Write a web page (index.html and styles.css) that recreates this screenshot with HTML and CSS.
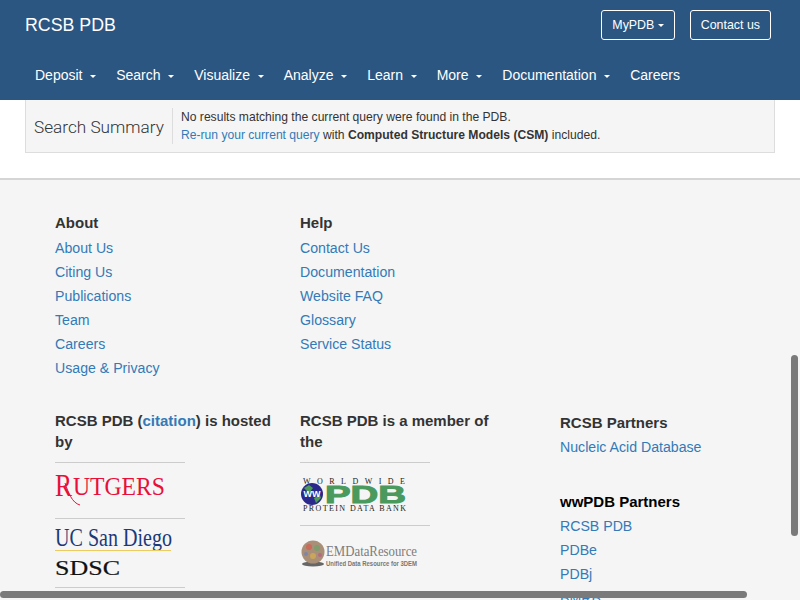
FILE: index.html
```html
<!DOCTYPE html>
<html lang="en">
<head>
    <meta charset="UTF-8">
    <meta name="viewport" content="width=device-width, initial-scale=1.0">
    <title>RCSB PDB</title>
    <link rel="stylesheet" href="styles.css">
</head>
<body>
    <header class="site-header">
        <div class="top-bar">
            <a class="brand" href="#">RCSB PDB</a>
            <div class="top-buttons">
                <a class="outline-btn" href="#">MyPDB <span class="caret"></span></a>
                <a class="outline-btn" href="#">Contact us</a>
            </div>
        </div>
        <nav class="main-nav">
            <a href="#">Deposit <span class="caret"></span></a>
            <a href="#">Search <span class="caret"></span></a>
            <a href="#">Visualize <span class="caret"></span></a>
            <a href="#">Analyze <span class="caret"></span></a>
            <a href="#">Learn <span class="caret"></span></a>
            <a href="#">More <span class="caret"></span></a>
            <a href="#">Documentation <span class="caret"></span></a>
            <a href="#">Careers</a>
        </nav>
    </header>

    <section class="summary">
        <h2 class="summary-title">Search Summary</h2>
        <div class="summary-text">
            <p>No results matching the current query were found in the PDB.</p>
            <p><a href="#">Re-run your current query</a> with <b>Computed Structure Models (CSM)</b> included.</p>
        </div>
    </section>

    <footer class="site-footer">
        <div class="footer-grid">
            <div class="link-block">
                <h4>About</h4>
                <a href="#">About Us</a>
                <a href="#">Citing Us</a>
                <a href="#">Publications</a>
                <a href="#">Team</a>
                <a href="#">Careers</a>
                <a href="#">Usage &amp; Privacy</a>
            </div>
            <div class="link-block">
                <h4>Help</h4>
                <a href="#">Contact Us</a>
                <a href="#">Documentation</a>
                <a href="#">Website FAQ</a>
                <a href="#">Glossary</a>
                <a href="#">Service Status</a>
            </div>
            <div></div>

            <div class="logo-block">
                <h4>RCSB PDB (<a href="#">citation</a>) is hosted by</h4>
                <div class="logo logo-rutgers">
                    <svg width="112" height="46" viewBox="0 0 112 46">
                        <text class="rutgers-r" x="0" y="33" textLength="17" lengthAdjust="spacingAndGlyphs">R</text>
                        <path class="rutgers-tail" d="M10 20 C13 29 17 40 25 42"></path>
                        <text class="rutgers-text" x="18" y="32" textLength="92" lengthAdjust="spacingAndGlyphs">UTGERS</text>
                    </svg>
                </div>
                <div class="logo logo-ucsd">
                    <svg width="118" height="60" viewBox="0 0 118 60">
                        <text class="ucsd-text" x="0" y="27" textLength="117" lengthAdjust="spacingAndGlyphs">UC San Diego</text>
                        <rect class="ucsd-line" x="0" y="31" width="116" height="1"></rect>
                        <text class="sdsc-text" x="0" y="56" textLength="65" lengthAdjust="spacingAndGlyphs">SDSC</text>
                    </svg>
                </div>
                <div class="logo"></div>
            </div>
            <div class="logo-block logo-block-narrow">
                <h4>RCSB PDB is a member of the</h4>
                <div class="logo logo-wwpdb">
                    <svg width="108" height="52" viewBox="0 0 108 52">
                        <text class="ww-small" x="3" y="21" textLength="102">WORLDWIDE</text>
                        <circle cx="12" cy="31" r="11" fill="#2b2a8c"></circle>
                        <path d="M4 25 l5 -3 l4 3 l-4 5 z M14 35 l6 -3 l1 3 l-5 5 z" fill="#4c9a55"></path>
                        <text class="ww-globe" x="12" y="34">WW</text>
                        <text class="ww-pdb" x="25" y="40" textLength="81" lengthAdjust="spacingAndGlyphs">PDB</text>
                        <text class="ww-small" x="3" y="48" textLength="103">PROTEIN DATA BANK</text>
                    </svg>
                </div>
                <div class="logo logo-em">
                    <svg width="118" height="46" viewBox="0 0 118 46">
                        <ellipse cx="13" cy="38" rx="11" ry="2.5" fill="#666"></ellipse>
                        <circle cx="13" cy="26" r="11.5" fill="#a98f78"></circle>
                        <circle cx="9" cy="21" r="3" fill="#c96a5a"></circle>
                        <circle cx="17" cy="22" r="3" fill="#7f9c6f"></circle>
                        <circle cx="13" cy="30" r="3" fill="#c9a65a"></circle>
                        <circle cx="6" cy="28" r="2" fill="#7d86a8"></circle>
                        <circle cx="20" cy="29" r="2" fill="#b46a80"></circle>
                        <text class="em-title" x="26" y="30" textLength="91" lengthAdjust="spacingAndGlyphs">EMDataResource</text>
                        <text class="em-sub" x="26" y="40" textLength="91" lengthAdjust="spacingAndGlyphs">Unified Data Resource for 3DEM</text>
                    </svg>
                </div>
            </div>
            <div class="partners">
                <div class="link-block">
                    <h4>RCSB Partners</h4>
                    <a href="#">Nucleic Acid Database</a>
                </div>
                <div class="link-block ww-partners">
                    <h4>wwPDB Partners</h4>
                    <a href="#">RCSB PDB</a>
                    <a href="#">PDBe</a>
                    <a href="#">PDBj</a>
                    <a href="#">BMRB</a>
                </div>
            </div>
        </div>
    </footer>

    <div class="scroll-thumb-v"></div>
    <div class="scroll-thumb-h"></div>
</body>
</html>
```

FILE: styles.css
```css
html, body {
    height: 600px;
    overflow: hidden;
}
body {
    margin: 0;
    position: relative;
    background: #fff;
    color: #333;
    font-family: "Liberation Sans", Arial, sans-serif;
    font-size: 14px;
}
a {
    color: #337ab7;
    text-decoration: none;
}
p, h2, h4 {
    margin: 0;
}

/* header */
.site-header {
    height: 100px;
    background-color: #2b5682;
    box-sizing: border-box;
    padding: 10px 29px 0 25px;
}
.top-bar {
    display: flex;
    justify-content: space-between;
    align-items: center;
    height: 30px;
}
.brand {
    color: #fff;
    font-size: 17.8px;
}
.top-buttons {
    display: flex;
    gap: 15px;
}
.outline-btn {
    display: block;
    box-sizing: border-box;
    height: 30px;
    line-height: 28px;
    padding: 0 10px;
    border: 1px solid #fff;
    border-radius: 3px;
    color: #fff;
    font-size: 12.4px;
}
.caret {
    display: inline-block;
    width: 0;
    height: 0;
    vertical-align: middle;
    border-top: 3.5px solid #fff;
    border-left: 3.5px solid transparent;
    border-right: 3.5px solid transparent;
}
.main-nav {
    display: flex;
    margin-top: 10px;
    height: 50px;
    align-items: center;
}
.main-nav a {
    color: #fff;
    padding: 0 10px;
    white-space: nowrap;
}
.main-nav .caret {
    margin-left: 3.8px;
}

/* search summary */
.summary {
    display: flex;
    align-items: center;
    box-sizing: border-box;
    height: 53px;
    margin: 0 25px;
    padding: 8px 8px 9px;
    background: #f5f5f5;
    border: 1px solid #ddd;
    border-top: none;
}
.summary-title {
    width: 130px;
    height: 36px;
    padding-right: 8px;
    font-family: Roboto, sans-serif;
    font-size: 17.2px;
    font-weight: 300;
    white-space: nowrap;
    line-height: 38px;
    border-right: 1px solid #ddd;
}
.summary-text {
    padding-left: 8px;
    font-size: 12.12px;
    line-height: 18px;
}
.summary-text b {
    color: #333;
}

/* footer */
.site-footer {
    margin-top: 25px;
    height: 420px;
    background: #f5f5f5;
    border-top: 2px solid #d5d5d5;
    padding: 32px 0 0 55px;
}
.footer-grid {
    display: grid;
    grid-template-columns: 245px 260px 185px;
}
.site-footer h4 {
    font-size: 15px;
    line-height: 21px;
    color: #333;
}
.link-block a {
    display: block;
    line-height: 24px;
    font-size: 14.15px;
}
.link-block h4 {
    margin-bottom: 3px;
}
.logo-block {
    width: 225px;
    margin-top: 30px;
}
.logo-block-narrow {
    width: 205px;
}
.logo-block h4 {
    margin-bottom: 10px;
}
.logo-block h4 a {
    font-weight: bold;
}
.logo {
    width: 130px;
    border-top: 1px solid #ccc;
}
.logo svg {
    display: block;
}
.logo-rutgers {
    height: 55px;
}
.logo-ucsd {
    height: 68px;
}
.logo-wwpdb {
    height: 62px;
}
.rutgers-r {
    font: 32px "Liberation Serif", serif;
    fill: #e8103a;
}
.rutgers-tail {
    fill: none;
    stroke: #e8103a;
    stroke-width: 1;
}
.rutgers-text {
    font: 25px "Liberation Serif", serif;
    fill: #e8103a;
}
.ucsd-text {
    font: 25.5px "Liberation Serif", serif;
    fill: #1b3a7a;
}
.ucsd-line {
    fill: #eccb5f;
}
.sdsc-text {
    font: 20px "Liberation Serif", serif;
    fill: #111;
    stroke: #111;
    stroke-width: 0.2;
}
.ww-small {
    font: 8px "Liberation Serif", serif;
    fill: #222;
}
.ww-globe {
    font: bold 9px "Liberation Sans", sans-serif;
    fill: #fff;
    text-anchor: middle;
}
.ww-pdb {
    font: bold 24px "Liberation Sans", sans-serif;
    fill: #4a9a5e;
    stroke: #4a9a5e;
}
.em-title {
    font: 15.5px "Liberation Serif", serif;
    fill: #7c7c7c;
}
.em-sub {
    font: bold 6.5px "Liberation Sans", sans-serif;
    fill: #777;
}
.partners {
    margin-top: 32px;
}
.partners h4 {
    margin-bottom: 2px;
}
.ww-partners {
    margin-top: 32px;
}
.ww-partners h4 {
    color: #000;
}

/* scrollbars lie over the page */
.scroll-thumb-v {
    position: absolute;
    top: 355px;
    left: 791px;
    width: 7px;
    height: 181px;
    border-radius: 4px;
    background: #7a7a7a;
}
.scroll-thumb-h {
    position: absolute;
    top: 591px;
    left: 0;
    width: 747px;
    height: 7px;
    border-radius: 4px;
    background: #7a7a7a;
}
```
